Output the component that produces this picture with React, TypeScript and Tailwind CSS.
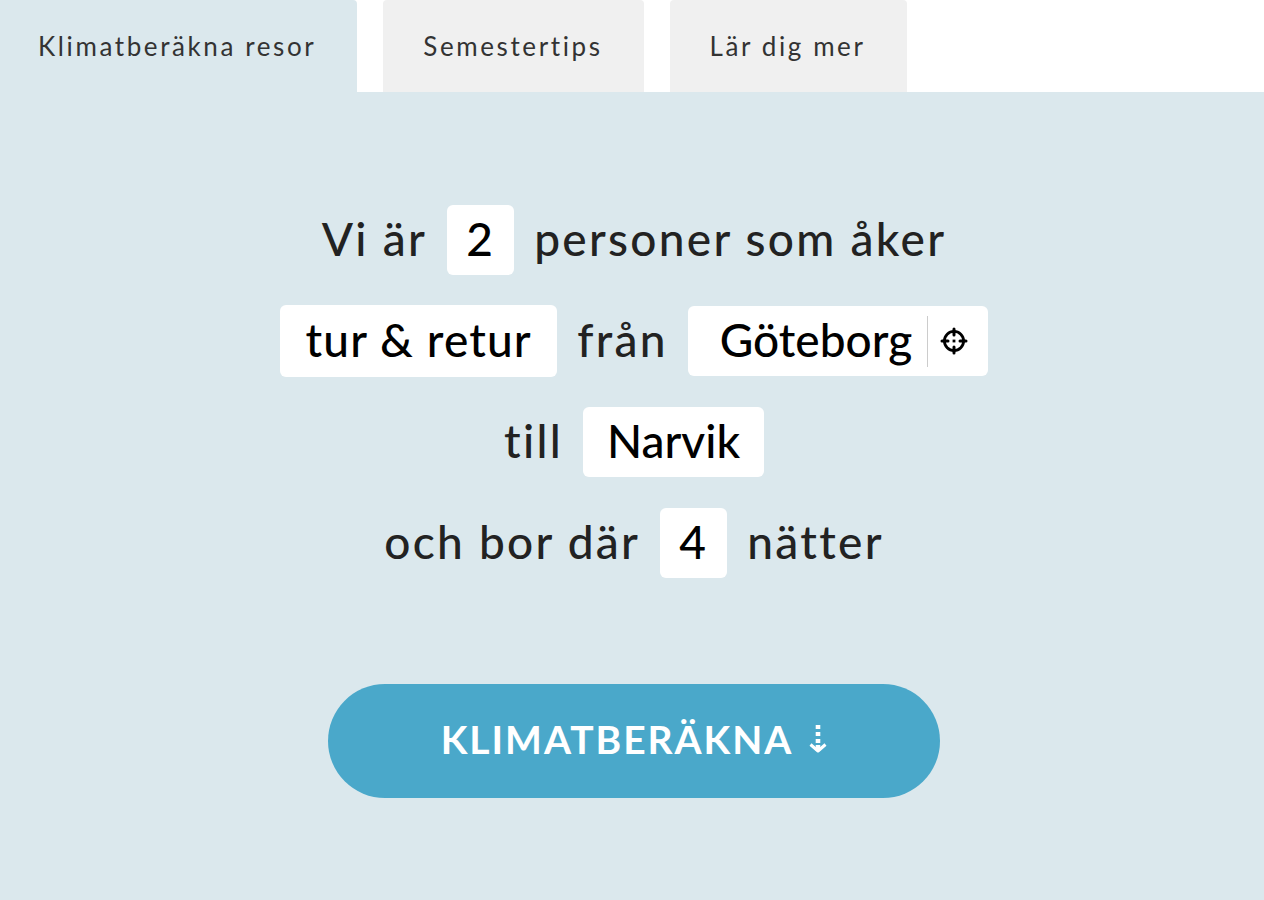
import { useState } from 'react';

const tabs = ['Klimatberäkna resor', 'Semestertips', 'Lär dig mer'];

const field = 'h-[70px] rounded-md bg-white pb-1 text-center text-black outline-none';
const row = 'flex h-[72px] items-center justify-center gap-5';

function CrosshairIcon() {
  return (
    <svg viewBox="0 0 28 28" className="size-7" fill="none" stroke="currentColor" aria-hidden="true">
      <circle cx="14" cy="14" r="9.6" strokeWidth="2.8" />
      <path d="M14 2v6M14 20v6M2 14h6M20 14h6" strokeWidth="3" strokeLinecap="round" />
      <path d="M12.6 14h2.8" strokeWidth="2.8" />
    </svg>
  );
}

function DownArrowIcon() {
  return (
    <svg viewBox="0 0 18 28" className="h-7 w-[18px]" fill="none" stroke="currentColor" aria-hidden="true">
      <path d="M9 0v4M9 7v4M9 14v4M9 20v6" strokeWidth="4.6" />
      <path d="M1.5 19.5L9 26L16.5 19.5" strokeWidth="3" strokeLinejoin="round" />
    </svg>
  );
}

export default function App() {
  const [active, setActive] = useState(0);
  const [people, setPeople] = useState('2');
  const [trip, setTrip] = useState('retur');
  const [from, setFrom] = useState('Göteborg');
  const [to, setTo] = useState('Narvik');
  const [nights, setNights] = useState('4');

  return (
    <div className="flex min-h-screen flex-col bg-white font-['Lato',sans-serif]">
      <nav className="flex gap-[26px]">
        {tabs.map((tab, i) => (
          <button
            key={tab}
            type="button"
            onClick={() => setActive(i)}
            className={`h-[92px] rounded-t-sm pr-[41px] pl-10 text-[26px] tracking-widest text-[#333] first:rounded-tl-none first:pl-[38px] ${
              i === active ? 'bg-[#dbe8ed]' : 'bg-[#f0f0f0]'
            }`}
          >
            {tab}
          </button>
        ))}
      </nav>

      <main className="flex-1 bg-[#dbe8ed] pt-[112px] pb-[102px] pl-1">
        <form onSubmit={(e) => e.preventDefault()} className="flex flex-col items-center">
          <div className="flex flex-col gap-[29px] text-[46px] font-medium tracking-wider text-[#222]">
            <div className={row}>
              <label htmlFor="people" className="pb-1">Vi är</label>
              <input
                id="people"
                value={people}
                onChange={(e) => setPeople(e.target.value)}
                className={`${field} w-[67px]`}
              />
              <span className="pb-1">personer som åker</span>
            </div>

            <div className={row}>
              <select
                aria-label="Typ av resa"
                value={trip}
                onChange={(e) => setTrip(e.target.value)}
                className="h-[72px] w-[277px] appearance-none rounded-md bg-white pb-1 text-center tracking-wide text-black outline-none"
              >
                <option value="retur">tur &amp; retur</option>
                <option value="enkel">enkel resa</option>
              </select>
              <label htmlFor="from" className="pb-1">från</label>
              <div className="flex h-[70px] w-[300px] items-center rounded-md bg-white text-black">
                <input
                  id="from"
                  value={from}
                  onChange={(e) => setFrom(e.target.value)}
                  className="min-w-0 flex-1 bg-transparent pb-1 pl-8 tracking-normal outline-none"
                />
                <button
                  type="button"
                  aria-label="Använd min position"
                  className="flex h-[51px] w-[61px] items-center border-l border-[#ccc] pl-3"
                >
                  <CrosshairIcon />
                </button>
              </div>
            </div>

            <div className={row}>
              <label htmlFor="to" className="pb-1">till</label>
              <input
                id="to"
                value={to}
                onChange={(e) => setTo(e.target.value)}
                className={`${field} w-[181px] tracking-normal`}
              />
            </div>

            <div className={row}>
              <label htmlFor="nights" className="pb-1">och bor där</label>
              <input
                id="nights"
                value={nights}
                onChange={(e) => setNights(e.target.value)}
                className={`${field} w-[67px]`}
              />
              <span className="pb-1">nätter</span>
            </div>
          </div>

          <button
            type="submit"
            className="mt-[105px] flex h-[114px] w-[612px] items-center justify-center gap-4 rounded-full bg-[#4aa8ca] pb-1 text-[39px] font-bold tracking-wider text-white"
          >
            KLIMATBERÄKNA
            <DownArrowIcon />
          </button>
        </form>
      </main>
    </div>
  );
}
